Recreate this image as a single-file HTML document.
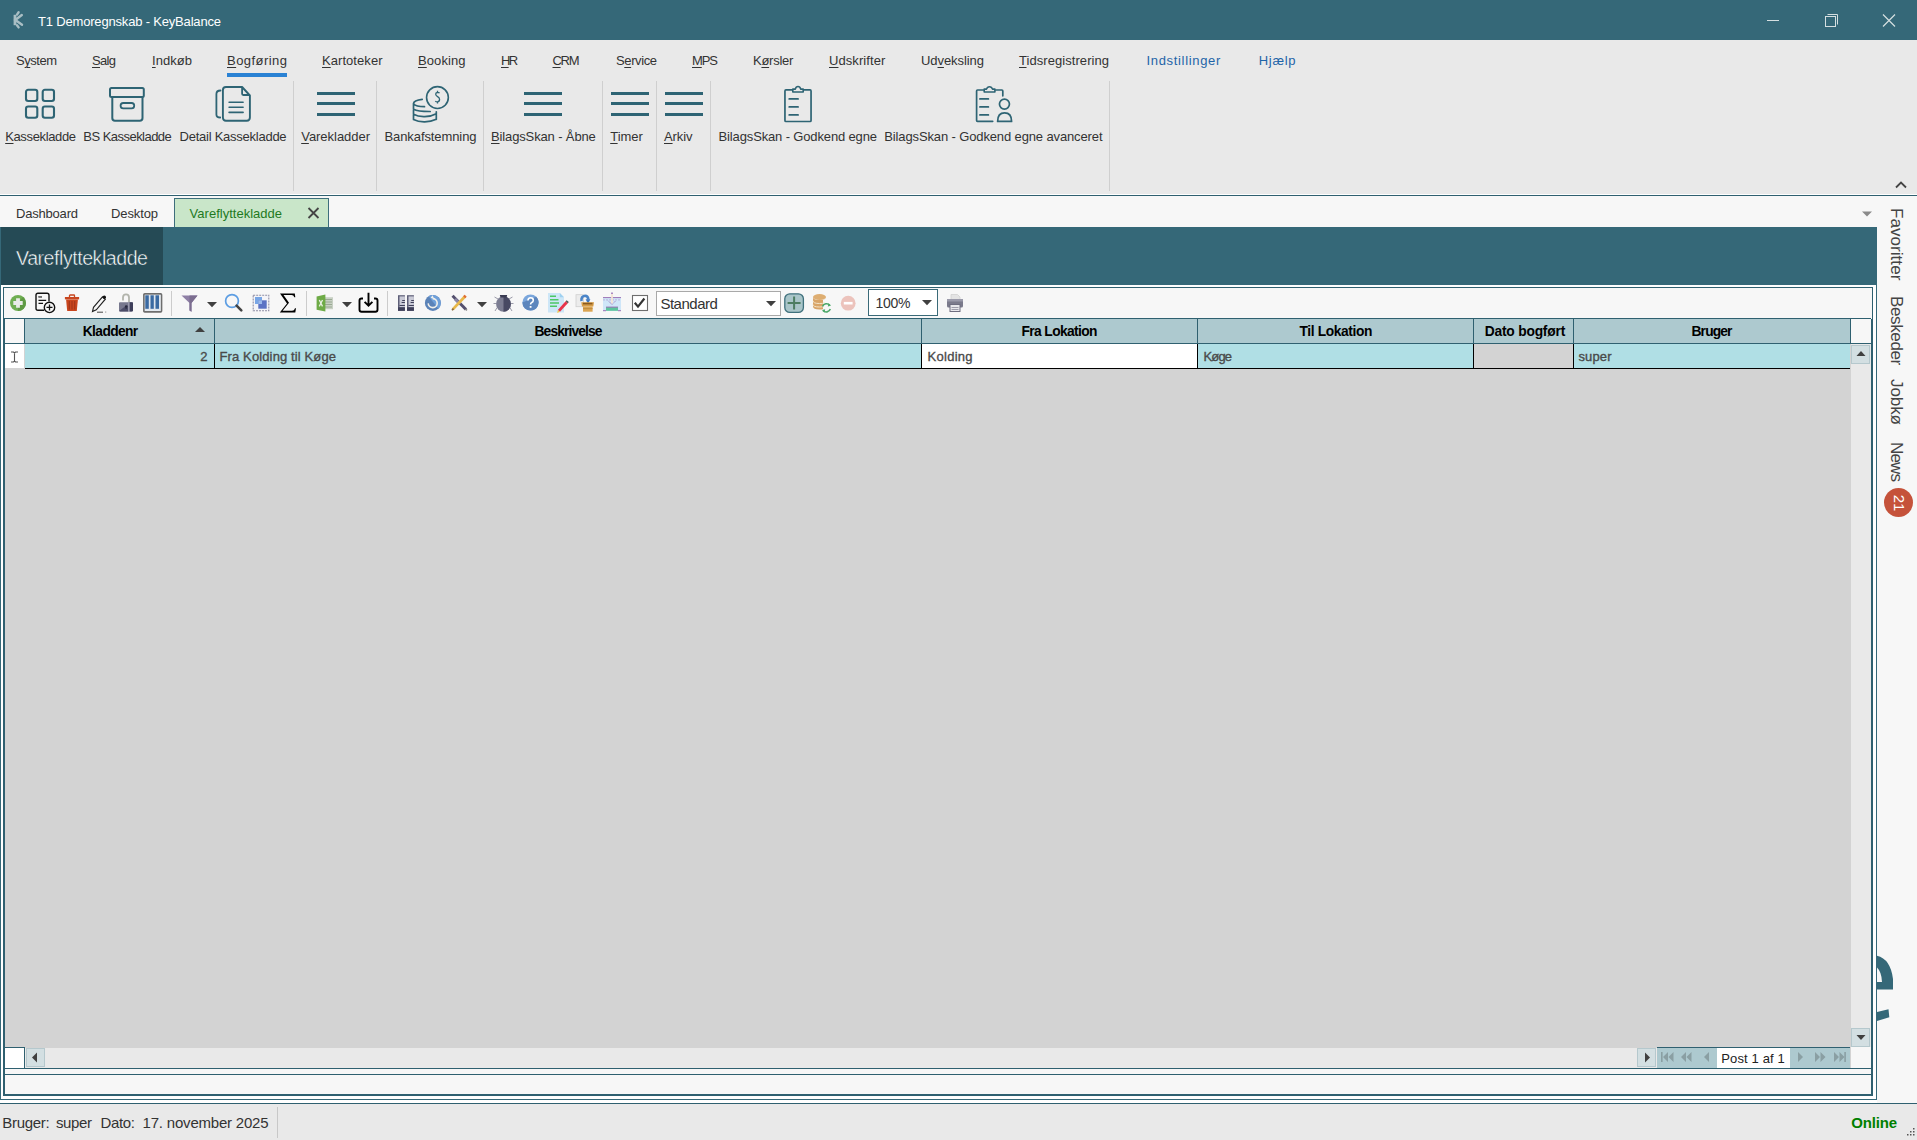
<!DOCTYPE html>
<html><head><meta charset="utf-8"><style>
html,body{margin:0;padding:0;}
body{width:1917px;height:1140px;overflow:hidden;position:relative;background:#e9e9e9;font-family:"Liberation Sans",sans-serif;}
.a{position:absolute;}
.t{white-space:nowrap;}
u{text-decoration:underline;text-decoration-thickness:1px;text-underline-offset:1.5px;}
svg{overflow:visible;}
</style></head><body>
<div class="a" style="left:0px;top:0px;width:1917px;height:40px;background:#356878;"></div>
<svg class="a" style="left:9px;top:10px;filter:blur(0.7px);" width="16" height="19" viewBox="0 0 16 19"><rect x="4.6" y="4.8" width="2.8" height="10.4" fill="#a9bec4"/><path d="M6 10.3 L12.8 5 M6 9.7 L13 14.8 M9.6 2.3 L8 4.6 M9.6 17.4 L8 15.2" stroke="#a9bec4" stroke-width="2.4" fill="none" stroke-linecap="round"/></svg>
<div class="a t " style="left:38.00px;top:11.79px;font-size:13px;line-height:20px;color:#ffffff;letter-spacing:-0.180px;">T1 Demoregnskab - KeyBalance</div>
<div class="a" style="left:1767px;top:20px;width:12px;height:1px;background:#d5dfe1;"></div>
<svg class="a" style="left:1824px;top:13px;" width="15" height="15" viewBox="0 0 15 15"><rect x="1.5" y="3.5" width="10" height="10" fill="none" stroke="#d5dfe1" stroke-width="1"/><path d="M3.5 1.5 H13.5 V11.5" fill="none" stroke="#d5dfe1" stroke-width="1"/></svg>
<svg class="a" style="left:1882px;top:14px;" width="14" height="13" viewBox="0 0 14 13"><path d="M1 0.5 L13 12.5 M13 0.5 L1 12.5" stroke="#d5dfe1" stroke-width="1.2"/></svg>
<div class="a" style="left:0px;top:40px;width:1917px;height:154px;background:#e9e9e9;"></div>
<div class="a t " style="left:16.00px;top:50.99px;font-size:13px;line-height:20px;color:#333333;letter-spacing:-0.468px;">S<u>y</u>stem</div>
<div class="a t " style="left:92.00px;top:50.99px;font-size:13px;line-height:20px;color:#333333;letter-spacing:-0.673px;"><u>S</u>alg</div>
<div class="a t " style="left:152.00px;top:50.99px;font-size:13px;line-height:20px;color:#333333;letter-spacing:0.052px;"><u>I</u>ndkøb</div>
<div class="a t " style="left:227.00px;top:50.99px;font-size:13px;line-height:20px;color:#333333;letter-spacing:0.455px;"><u>B</u>ogføring</div>
<div class="a t " style="left:322.00px;top:50.99px;font-size:13px;line-height:20px;color:#333333;letter-spacing:0.059px;"><u>K</u>artoteker</div>
<div class="a t " style="left:418.00px;top:50.99px;font-size:13px;line-height:20px;color:#333333;letter-spacing:0.087px;"><u>B</u>ooking</div>
<div class="a t " style="left:501.00px;top:50.99px;font-size:13px;line-height:20px;color:#333333;letter-spacing:-1.777px;"><u>H</u>R</div>
<div class="a t " style="left:552.50px;top:50.99px;font-size:13px;line-height:20px;color:#333333;letter-spacing:-1.303px;"><u>C</u>RM</div>
<div class="a t " style="left:616.00px;top:50.99px;font-size:13px;line-height:20px;color:#333333;letter-spacing:-0.391px;">S<u>e</u>rvice</div>
<div class="a t " style="left:692.00px;top:50.99px;font-size:13px;line-height:20px;color:#333333;letter-spacing:-1.086px;"><u>M</u>PS</div>
<div class="a t " style="left:753.00px;top:50.99px;font-size:13px;line-height:20px;color:#333333;letter-spacing:-0.264px;">K<u>ø</u>rsler</div>
<div class="a t " style="left:829.00px;top:50.99px;font-size:13px;line-height:20px;color:#333333;letter-spacing:0.076px;"><u>U</u>dskrifter</div>
<div class="a t " style="left:921.00px;top:50.99px;font-size:13px;line-height:20px;color:#333333;letter-spacing:-0.065px;">Ud<u>v</u>eksling</div>
<div class="a t " style="left:1019.00px;top:50.99px;font-size:13px;line-height:20px;color:#333333;letter-spacing:0.060px;"><u>T</u>idsregistrering</div>
<div class="a t " style="left:1146.50px;top:50.99px;font-size:13px;line-height:20px;color:#1e64a8;letter-spacing:0.671px;">Indstillinger</div>
<div class="a t " style="left:1258.70px;top:50.99px;font-size:13px;line-height:20px;color:#1e64a8;letter-spacing:0.711px;">Hjælp</div>
<div class="a" style="left:227px;top:73px;width:60px;height:4px;background:#2a82d4;"></div>
<div class="a" style="left:293px;top:81px;width:1px;height:110px;background:#cfcfcf;"></div>
<div class="a" style="left:376px;top:81px;width:1px;height:110px;background:#cfcfcf;"></div>
<div class="a" style="left:483px;top:81px;width:1px;height:110px;background:#cfcfcf;"></div>
<div class="a" style="left:602px;top:81px;width:1px;height:110px;background:#cfcfcf;"></div>
<div class="a" style="left:656px;top:81px;width:1px;height:110px;background:#cfcfcf;"></div>
<div class="a" style="left:710px;top:81px;width:1px;height:110px;background:#cfcfcf;"></div>
<div class="a" style="left:1109px;top:81px;width:1px;height:110px;background:#cfcfcf;"></div>
<div class="a t " style="left:5.20px;top:127.19px;font-size:13px;line-height:20px;color:#333333;letter-spacing:-0.364px;"><u>K</u>assekladde</div>
<div class="a t " style="left:83.30px;top:127.19px;font-size:13px;line-height:20px;color:#333333;letter-spacing:-0.530px;">BS Kassekladde</div>
<div class="a t " style="left:179.60px;top:127.19px;font-size:13px;line-height:20px;color:#333333;letter-spacing:-0.252px;">Detail Kassekladde</div>
<div class="a t " style="left:301.20px;top:127.19px;font-size:13px;line-height:20px;color:#333333;letter-spacing:-0.033px;"><u>V</u>arekladder</div>
<div class="a t " style="left:384.50px;top:127.19px;font-size:13px;line-height:20px;color:#333333;letter-spacing:-0.094px;">Bankafstemning</div>
<div class="a t " style="left:491.00px;top:127.19px;font-size:13px;line-height:20px;color:#333333;letter-spacing:-0.134px;"><u>B</u>ilagsSkan - Åbne</div>
<div class="a t " style="left:610.20px;top:127.19px;font-size:13px;line-height:20px;color:#333333;letter-spacing:-0.033px;"><u>T</u>imer</div>
<div class="a t " style="left:664.00px;top:127.19px;font-size:13px;line-height:20px;color:#333333;letter-spacing:-0.122px;"><u>A</u>rkiv</div>
<div class="a t " style="left:718.60px;top:127.19px;font-size:13px;line-height:20px;color:#333333;letter-spacing:-0.145px;">BilagsSkan - Godkend egne</div>
<div class="a t " style="left:884.30px;top:127.19px;font-size:13px;line-height:20px;color:#333333;letter-spacing:-0.129px;">BilagsSkan - Godkend egne avanceret</div>
<svg class="a" style="left:20px;top:85px;" width="40" height="40" viewBox="0 0 40 40"><rect x="6" y="4.75" width="11.3" height="11.3" rx="2.2" fill="none" stroke="#2e6474" stroke-width="2.1"/><rect x="22.700000000000003" y="4.75" width="11.3" height="11.3" rx="2.2" fill="none" stroke="#2e6474" stroke-width="2.1"/><rect x="6" y="21.5" width="11.3" height="11.3" rx="2.2" fill="none" stroke="#2e6474" stroke-width="2.1"/><rect x="22.700000000000003" y="21.5" width="11.3" height="11.3" rx="2.2" fill="none" stroke="#2e6474" stroke-width="2.1"/></svg>
<svg class="a" style="left:105px;top:84px;" width="44" height="40" viewBox="0 0 44 40"><rect x="5" y="4" width="33.8" height="9" rx="1.5" fill="none" stroke="#2e6474" stroke-width="2"/><path d="M7.3 13 V34 Q7.3 36.8 10 36.8 H34.8 Q37.5 36.8 37.5 34 V13" fill="none" stroke="#2e6474" stroke-width="2"/><rect x="15.6" y="19" width="13.6" height="5.3" rx="2.6" fill="none" stroke="#2e6474" stroke-width="1.8"/></svg>
<svg class="a" style="left:212px;top:84px;" width="42" height="40" viewBox="0 0 42 40"><path d="M8.5 6.5 Q4.4 6.5 4.4 10 V30.5 Q4.4 33.5 8.2 33.5" fill="none" stroke="#2e6474" stroke-width="1.8" stroke-linecap="round"/><path d="M14 3 H30.1 L37.9 11.5 V33.5 Q37.9 36.7 34.7 36.7 H14 Q10.9 36.7 10.9 33.5 V6.2 Q10.9 3 14 3 Z" fill="none" stroke="#2e6474" stroke-width="1.9" stroke-linejoin="round"/><path d="M30.1 3 V9.8 Q30.1 11 31.3 11 H37.9" fill="none" stroke="#2e6474" stroke-width="1.8"/><path d="M17.1 18.3 H31.1 M17.1 23.2 H31.1 M17.1 28.4 H31.1" stroke="#2e6474" stroke-width="1.6" stroke-linecap="round"/></svg>
<div class="a" style="left:317px;top:92px;width:38px;height:3.2px;background:#2e6474;"></div>
<div class="a" style="left:317px;top:102.3px;width:38px;height:3.2px;background:#2e6474;"></div>
<div class="a" style="left:317px;top:112.6px;width:38px;height:3.2px;background:#2e6474;"></div>
<div class="a" style="left:524px;top:92px;width:38px;height:3.2px;background:#2e6474;"></div>
<div class="a" style="left:524px;top:102.3px;width:38px;height:3.2px;background:#2e6474;"></div>
<div class="a" style="left:524px;top:112.6px;width:38px;height:3.2px;background:#2e6474;"></div>
<div class="a" style="left:611px;top:92px;width:38px;height:3.2px;background:#2e6474;"></div>
<div class="a" style="left:611px;top:102.3px;width:38px;height:3.2px;background:#2e6474;"></div>
<div class="a" style="left:611px;top:112.6px;width:38px;height:3.2px;background:#2e6474;"></div>
<div class="a" style="left:665px;top:92px;width:38px;height:3.2px;background:#2e6474;"></div>
<div class="a" style="left:665px;top:102.3px;width:38px;height:3.2px;background:#2e6474;"></div>
<div class="a" style="left:665px;top:112.6px;width:38px;height:3.2px;background:#2e6474;"></div>
<svg class="a" style="left:410px;top:83px;" width="42" height="42" viewBox="0 0 42 42"><circle cx="27.45" cy="14.55" r="10.9" fill="none" stroke="#2e6474" stroke-width="1.6"/><path d="M29.6 9.9 Q28.8 9.3 27.4 9.3 Q25.6 9.5 25.7 11.3 Q25.8 12.6 27.6 13.6 Q29.6 14.8 29.6 16.4 Q29.5 18.7 27.4 18.8 Q26 18.8 25.3 18.1 M27.5 7.8 V9.3 M27.5 18.8 V20.6" fill="none" stroke="#2e6474" stroke-width="1.3"/><path d="M12.2 16.3 Q4 17.2 3.5 20.3 V36.5 M3.5 20.8 Q6 23.7 14.5 23.7 M3.5 26.2 Q8 28.6 20.2 28.5 M3.5 31.3 Q8 33.8 14.7 33.6 Q21 33.6 26.3 30.7 M26.3 28.8 V36.3 M3.5 36.5 Q8 38.9 14.7 38.8 Q21 38.7 26.3 36.3" fill="none" stroke="#2e6474" stroke-width="1.7" stroke-linecap="round"/></svg>
<svg class="a" style="left:780px;top:82px;" width="36" height="44" viewBox="0 0 36 44"><path d="M12.3 7.95 H5.95 Q4.95 7.95 4.95 8.95 V38.5 Q4.95 39.5 5.95 39.5 H30.05 Q31.05 39.5 31.05 38.5 V8.95 Q31.05 7.95 30.05 7.95 H23.7" fill="none" stroke="#2e6474" stroke-width="1.7"/><path d="M12.8 10 V7.1 H15.3 Q16 4.5 18 4.5 Q20 4.5 20.7 7.1 H23.2 V10 Z" fill="none" stroke="#2e6474" stroke-width="1.6" stroke-linejoin="round"/><path d="M9.2 16.9 H18.1 M9.2 24.9 H18.1 M9.2 32.9 H18.1" stroke="#2e6474" stroke-width="1.7" stroke-linecap="round"/></svg>
<svg class="a" style="left:972px;top:82px;" width="44" height="44" viewBox="0 0 44 44"><path d="M11.4 8 H5.5 Q4.6 8 4.6 9 V38.4 Q4.6 39.3 5.5 39.3 H20.7 M23.8 8 H29.9 Q30.8 8 30.8 9 V13.8" fill="none" stroke="#2e6474" stroke-width="1.7" stroke-linecap="round"/><path d="M12.2 10 V7.1 H14.5 Q15.3 4.7 17.5 4.7 Q19.7 4.7 20.5 7.1 H22.9 V10 Z" fill="none" stroke="#2e6474" stroke-width="1.6" stroke-linejoin="round"/><path d="M7.9 16.9 H16.4 M7.9 24.9 H16.4 M7.9 32.9 H16.4" stroke="#2e6474" stroke-width="1.7" stroke-linecap="round"/><circle cx="32.45" cy="22.1" r="5" fill="none" stroke="#2e6474" stroke-width="1.7"/><path d="M25.6 39.4 Q25.6 30.8 32.6 30.8 Q39.6 30.8 39.6 39.4 Z" fill="none" stroke="#2e6474" stroke-width="1.7" stroke-linejoin="round"/></svg>
<svg class="a" style="left:1893.5px;top:179.5px;" width="14" height="10" viewBox="0 0 14 10"><path d="M2 7.5 L7 2.5 L12 7.5" fill="none" stroke="#444" stroke-width="1.8"/></svg>
<div class="a" style="left:0px;top:194px;width:1917px;height:1px;background:#ffffff;"></div>
<div class="a" style="left:0px;top:195px;width:1917px;height:1px;background:#2f6070;"></div>
<div class="a" style="left:0px;top:196px;width:1917px;height:31px;background:#f7f7f7;"></div>
<div class="a t " style="left:16.00px;top:204.49px;font-size:13px;line-height:20px;color:#333333;letter-spacing:-0.199px;">Dashboard</div>
<div class="a t " style="left:111.00px;top:204.49px;font-size:13px;line-height:20px;color:#333333;letter-spacing:-0.115px;">Desktop</div>
<div class="a" style="left:174px;top:198px;width:155px;height:29px;background:#c9e6c9;border:1px solid #3d6e7c;border-bottom:none;box-sizing:border-box;"></div>
<div class="a t " style="left:189.60px;top:204.49px;font-size:13px;line-height:20px;color:#1f7a1f;letter-spacing:0.010px;">Vareflyttekladde</div>
<svg class="a" style="left:307px;top:207px;" width="13" height="12" viewBox="0 0 13 12"><path d="M1.5 1 L11.5 11 M11.5 1 L1.5 11" stroke="#444" stroke-width="1.8"/></svg>
<svg class="a" style="left:1861px;top:210.7px;" width="12" height="7" viewBox="0 0 12 7"><path d="M1 0.5 H11 L6 5.5 Z" fill="#8a8a8a"/></svg>
<div class="a" style="left:1877px;top:227px;width:40px;height:876px;background:#f7f7f7;"></div>
<div class="a t" style="left:1896px;top:207.5px;font-size:17px;line-height:20px;color:#444;letter-spacing:0.057px;transform-origin:0 0;transform:rotate(90deg) translate(0,-10.0px);">Favoritter</div>
<div class="a t" style="left:1896px;top:295.5px;font-size:17px;line-height:20px;color:#444;letter-spacing:-0.373px;transform-origin:0 0;transform:rotate(90deg) translate(0,-10.0px);">Beskeder</div>
<div class="a t" style="left:1896px;top:379px;font-size:17px;line-height:20px;color:#444;letter-spacing:-0.073px;transform-origin:0 0;transform:rotate(90deg) translate(0,-10.0px);">Jobkø</div>
<div class="a t" style="left:1896px;top:442px;font-size:17px;line-height:20px;color:#444;letter-spacing:-0.836px;transform-origin:0 0;transform:rotate(90deg) translate(0,-10.0px);">News</div>
<div class="a" style="left:1884px;top:488px;width:29px;height:29px;border-radius:50%;background:#c5523a;"></div>
<div class="a t" style="left:1898.5px;top:502.5px;font-size:15px;line-height:20px;color:#fff;transform:translate(-50%,-50%) rotate(90deg);">21</div>
<svg class="a" style="left:1877px;top:955px;" width="20" height="70" viewBox="0 0 20 70"><path d="M0 0.8 Q13.5 4 16 24 V34.6 H0 V27 H5 Q4.6 17 0 12.6 Z" fill="#356878"/><path d="M0 57 L11.5 54.3 L12.3 62.2 L0 66 Z" fill="#356878"/></svg>
<div class="a" style="left:0px;top:227px;width:1877px;height:876px;background:#ffffff;"></div>
<div class="a" style="left:0px;top:227px;width:1px;height:873px;background:#356878;"></div>
<div class="a" style="left:1876px;top:227px;width:1px;height:873px;background:#356878;"></div>
<div class="a" style="left:0px;top:1099px;width:1877px;height:1px;background:#356878;"></div>
<div class="a" style="left:1px;top:227px;width:1875px;height:58px;background:#356878;"></div>
<div class="a" style="left:1px;top:227px;width:162px;height:58px;background:#254a55;"></div>
<div class="a t " style="left:16.00px;top:248.20px;font-size:19.6px;line-height:20px;color:#ffffff;letter-spacing:-0.472px;-webkit-text-stroke:0.45px #254a55;">Vareflyttekladde</div>
<div class="a" style="left:3px;top:287px;width:1870px;height:809px;background:#f7f7f7;border:1px solid #2f6070;box-sizing:border-box;"></div>
<div class="a" style="left:3px;top:1094px;width:1870px;height:2px;background:#2f6070;"></div>
<div class="a" style="left:3px;top:1069px;width:2px;height:27px;background:#2f6070;"></div>
<div class="a" style="left:1871px;top:1069px;width:2px;height:27px;background:#2f6070;"></div>
<div class="a" style="left:171px;top:291px;width:1px;height:25px;background:#cccccc;"></div>
<div class="a" style="left:306px;top:291px;width:1px;height:25px;background:#cccccc;"></div>
<div class="a" style="left:387px;top:291px;width:1px;height:25px;background:#cccccc;"></div>
<div class="a" style="left:4px;top:318px;width:1867px;height:1px;background:#2f6070;"></div>
<div class="a" style="left:4px;top:319px;width:1867px;height:750px;background:#d3d3d3;"></div>
<div class="a" style="left:5px;top:319px;width:19px;height:24px;background:#f7f7f7;"></div>
<div class="a" style="left:25px;top:319px;width:1825px;height:24px;background:#adc9cf;"></div>
<div class="a" style="left:1851px;top:319px;width:20px;height:24px;background:#f7f7f7;"></div>
<div class="a" style="left:4px;top:343px;width:1867px;height:1px;background:#2f6070;"></div>
<div class="a" style="left:4px;top:319px;width:1px;height:750px;background:#2f6070;"></div>
<div class="a" style="left:1871px;top:319px;width:1px;height:750px;background:#2f6070;"></div>
<div class="a" style="left:24px;top:319px;width:1px;height:25px;background:#2f6070;"></div>
<div class="a" style="left:214px;top:319px;width:1px;height:25px;background:#2f6070;"></div>
<div class="a" style="left:921px;top:319px;width:1px;height:25px;background:#2f6070;"></div>
<div class="a" style="left:1197px;top:319px;width:1px;height:25px;background:#2f6070;"></div>
<div class="a" style="left:1473px;top:319px;width:1px;height:25px;background:#2f6070;"></div>
<div class="a" style="left:1573px;top:319px;width:1px;height:25px;background:#2f6070;"></div>
<div class="a" style="left:1850px;top:319px;width:1px;height:25px;background:#2f6070;"></div>
<div class="a t " style="left:82.75px;top:322.42px;font-size:13.8px;line-height:20px;color:#000000;font-weight:bold;letter-spacing:-0.615px;">Kladdenr</div>
<div class="a t " style="left:534.50px;top:322.42px;font-size:13.8px;line-height:20px;color:#000000;font-weight:bold;letter-spacing:-0.872px;">Beskrivelse</div>
<div class="a t " style="left:1021.50px;top:322.42px;font-size:13.8px;line-height:20px;color:#000000;font-weight:bold;letter-spacing:-0.618px;">Fra Lokation</div>
<div class="a t " style="left:1299.50px;top:322.42px;font-size:13.8px;line-height:20px;color:#000000;font-weight:bold;letter-spacing:-0.379px;">Til Lokation</div>
<div class="a t " style="left:1484.75px;top:322.42px;font-size:13.8px;line-height:20px;color:#000000;font-weight:bold;letter-spacing:-0.207px;">Dato bogført</div>
<div class="a t " style="left:1691.50px;top:322.42px;font-size:13.8px;line-height:20px;color:#000000;font-weight:bold;letter-spacing:-0.848px;">Bruger</div>
<svg class="a" style="left:194px;top:326px;" width="12" height="7" viewBox="0 0 12 7"><path d="M1 6 L6 1 L11 6 Z" fill="#404040"/></svg>
<div class="a" style="left:5px;top:344px;width:19px;height:24px;background:#ffffff;"></div>
<div class="a" style="left:25px;top:344px;width:1825px;height:24px;background:#b0dfe5;"></div>
<div class="a" style="left:922px;top:344px;width:275px;height:24px;background:#ffffff;"></div>
<div class="a" style="left:1474px;top:344px;width:99px;height:24px;background:#d3d3d3;"></div>
<div class="a" style="left:25px;top:368px;width:1825px;height:1px;background:#000000;"></div>
<div class="a" style="left:214px;top:344px;width:1px;height:25px;background:#000000;"></div>
<div class="a" style="left:921px;top:344px;width:1px;height:25px;background:#000000;"></div>
<div class="a" style="left:1197px;top:344px;width:1px;height:25px;background:#000000;"></div>
<div class="a" style="left:1473px;top:344px;width:1px;height:25px;background:#000000;"></div>
<div class="a" style="left:1573px;top:344px;width:1px;height:25px;background:#000000;"></div>
<svg class="a" style="left:10px;top:351px;" width="9" height="12" viewBox="0 0 9 12"><path d="M1 1 H3.5 L4.5 2 L5.5 1 H8 M4.5 2 V10 M1 11 H3.5 L4.5 10 L5.5 11 H8" fill="none" stroke="#555" stroke-width="1.1"/></svg>
<div class="a t " style="left:200.27px;top:346.79px;font-size:13px;line-height:20px;color:#4a4a4a;-webkit-text-stroke:0.35px #4a4a4a;">2</div>
<div class="a t " style="left:219.50px;top:346.79px;font-size:13px;line-height:20px;color:#4a4a4a;letter-spacing:0.123px;-webkit-text-stroke:0.35px #4a4a4a;">Fra Kolding til Køge</div>
<div class="a t " style="left:927.60px;top:346.79px;font-size:13px;line-height:20px;color:#4a4a4a;letter-spacing:0.272px;-webkit-text-stroke:0.35px #4a4a4a;">Kolding</div>
<div class="a t " style="left:1203.50px;top:346.79px;font-size:13px;line-height:20px;color:#4a4a4a;letter-spacing:-0.857px;-webkit-text-stroke:0.35px #4a4a4a;">Køge</div>
<div class="a t " style="left:1578.50px;top:346.79px;font-size:13px;line-height:20px;color:#4a4a4a;letter-spacing:0.121px;-webkit-text-stroke:0.35px #4a4a4a;">super</div>
<div class="a" style="left:1851px;top:344px;width:20px;height:703px;background:#e9e9e9;"></div>
<div class="a" style="left:1851px;top:345px;width:19px;height:19px;background:#d3dfe2;border:1px solid #b5c8cd;box-sizing:border-box;"></div>
<svg class="a" style="left:1856px;top:350px;" width="10" height="7" viewBox="0 0 10 7"><path d="M0.5 6 L5 1 L9.5 6 Z" fill="#404040"/></svg>
<div class="a" style="left:1851px;top:1028px;width:19px;height:19px;background:#d3dfe2;border:1px solid #b5c8cd;box-sizing:border-box;"></div>
<svg class="a" style="left:1856px;top:1034px;" width="10" height="7" viewBox="0 0 10 7"><path d="M0.5 1 L5 6 L9.5 1 Z" fill="#404040"/></svg>
<div class="a" style="left:4px;top:1047px;width:21px;height:1px;background:#2f6070;"></div>
<div class="a" style="left:1657px;top:1047px;width:193px;height:1px;background:#2f6070;"></div>
<div class="a" style="left:5px;top:1048px;width:19px;height:20px;background:#ffffff;"></div>
<div class="a" style="left:24px;top:1047px;width:1px;height:21px;background:#2f6070;"></div>
<div class="a" style="left:25px;top:1048px;width:1632px;height:20px;background:#e9e9e9;"></div>
<div class="a" style="left:26px;top:1048px;width:19px;height:19px;background:#d3dfe2;border:1px solid #b5c8cd;box-sizing:border-box;"></div>
<svg class="a" style="left:31px;top:1052px;" width="7" height="11" viewBox="0 0 7 11"><path d="M6 0.5 L1 5.5 L6 10.5 Z" fill="#404040"/></svg>
<div class="a" style="left:1637px;top:1048px;width:19px;height:19px;background:#d3dfe2;border:1px solid #b5c8cd;box-sizing:border-box;"></div>
<svg class="a" style="left:1644px;top:1052px;" width="7" height="11" viewBox="0 0 7 11"><path d="M1 0.5 L6 5.5 L1 10.5 Z" fill="#404040"/></svg>
<div class="a" style="left:1657px;top:1048px;width:193px;height:20px;background:#adc9cf;"></div>
<div class="a" style="left:1717px;top:1048px;width:73px;height:20px;background:#ffffff;"></div>
<div class="a" style="left:1851px;top:1047px;width:20px;height:21px;background:#f7f7f7;"></div>
<div class="a t " style="left:1721.20px;top:1049.49px;font-size:13px;line-height:20px;color:#222222;letter-spacing:0.145px;">Post 1 af 1</div>
<svg class="a" style="left:1660px;top:1051px;" width="16" height="12" viewBox="0 0 16 12"><rect x="1" y="1" width="1.6" height="10" fill="#8a9fa3"/><path d="M8 1 L3 6 L8 11 Z M13.5 1 L8.5 6 L13.5 11 Z" fill="#8a9fa3"/></svg>
<svg class="a" style="left:1680px;top:1051px;" width="13" height="12" viewBox="0 0 13 12"><path d="M6 1 L1 6 L6 11 Z M11.5 1 L6.5 6 L11.5 11 Z" fill="#8a9fa3"/></svg>
<svg class="a" style="left:1702px;top:1051px;" width="9" height="12" viewBox="0 0 9 12"><path d="M7 1 L2 6 L7 11 Z" fill="#8a9fa3"/></svg>
<svg class="a" style="left:1796px;top:1051px;" width="9" height="12" viewBox="0 0 9 12"><path d="M2 1 L7 6 L2 11 Z" fill="#8a9fa3"/></svg>
<svg class="a" style="left:1813px;top:1051px;" width="14" height="12" viewBox="0 0 14 12"><path d="M2 1 L7 6 L2 11 Z M7.5 1 L12.5 6 L7.5 11 Z" fill="#8a9fa3"/></svg>
<svg class="a" style="left:1832px;top:1051px;" width="15" height="12" viewBox="0 0 15 12"><path d="M2 1 L7 6 L2 11 Z M7.5 1 L12.5 6 L7.5 11 Z" fill="#8a9fa3"/><rect x="12.3" y="1" width="1.6" height="10" fill="#8a9fa3"/></svg>
<div class="a" style="left:4px;top:1068px;width:1868px;height:1px;background:#2f6070;"></div>
<div class="a" style="left:5px;top:1069px;width:1866px;height:5px;background:#f7f7f7;"></div>
<div class="a" style="left:4px;top:1074px;width:1868px;height:1px;background:#2f6070;"></div>
<div class="a" style="left:0px;top:1103px;width:1917px;height:1px;background:#2f6070;"></div>
<div class="a" style="left:0px;top:1104px;width:1917px;height:36px;background:#e9e9e9;"></div>
<div class="a t " style="left:2.30px;top:1112.80px;font-size:15px;line-height:20px;color:#333333;letter-spacing:-0.314px;">Bruger:</div>
<div class="a t " style="left:56.00px;top:1112.80px;font-size:15px;line-height:20px;color:#333333;letter-spacing:-0.380px;">super</div>
<div class="a t " style="left:100.60px;top:1112.80px;font-size:15px;line-height:20px;color:#333333;letter-spacing:-0.363px;">Dato:</div>
<div class="a t " style="left:142.60px;top:1112.80px;font-size:15px;line-height:20px;color:#333333;letter-spacing:-0.203px;">17. november 2025</div>
<div class="a" style="left:277px;top:1107px;width:1px;height:31px;background:#c8c8c8;"></div>
<div class="a t " style="left:1851.20px;top:1112.80px;font-size:15px;line-height:20px;color:#008000;font-weight:bold;letter-spacing:-0.173px;">Online</div>
<svg class="a" style="left:1905px;top:1128px;" width="10" height="8" viewBox="0 0 10 8"><rect x="8" y="0" width="1.5" height="1.5" fill="#555"/><rect x="7" y="-1" width="1" height="1" fill="#999" opacity="0"/><rect x="5" y="3" width="1.5" height="1.5" fill="#555"/><rect x="4" y="2" width="1" height="1" fill="#999" opacity="0"/><rect x="8" y="3" width="1.5" height="1.5" fill="#555"/><rect x="7" y="2" width="1" height="1" fill="#999" opacity="0"/><rect x="2" y="6" width="1.5" height="1.5" fill="#555"/><rect x="1" y="5" width="1" height="1" fill="#999" opacity="0"/><rect x="5" y="6" width="1.5" height="1.5" fill="#555"/><rect x="4" y="5" width="1" height="1" fill="#999" opacity="0"/><rect x="8" y="6" width="1.5" height="1.5" fill="#555"/><rect x="7" y="5" width="1" height="1" fill="#999" opacity="0"/></svg>
<svg class="a" style="left:10px;top:295px;" width="16" height="16" viewBox="0 0 16 16"><circle cx="8" cy="8" r="8" fill="#6fae52"/><path d="M8 16 A8 8 0 0 0 16 8 A8 8 0 0 0 13 1.8 L8 8 Z" fill="#5f9a44"/><path d="M6.1 3.3 H9.9 V6.1 H12.7 V9.9 H9.9 V12.7 H6.1 V9.9 H3.3 V6.1 H6.1 Z" fill="#e9ebe8"/></svg>
<svg class="a" style="left:34px;top:292px;" width="22" height="22" viewBox="0 0 22 22"><path d="M10 18.3 H4 Q2 18.3 2 16.3 V3.3 Q2 1.3 4 1.3 H13 Q15 1.3 15 3.3 V9.5" fill="none" stroke="#111" stroke-width="1.4"/><path d="M4.5 4.8 H8 M4.5 8.3 H12.2 M4.5 11.4 H9" stroke="#111" stroke-width="1.3"/><path d="M4.5 4.8 H8" stroke="#777" stroke-width="1.3"/><circle cx="15.5" cy="15.4" r="5.2" fill="#f7f7f7" stroke="#111" stroke-width="1.4"/><path d="M15.5 12.4 V18.4 M12.5 15.4 H18.5" stroke="#111" stroke-width="1.3"/></svg>
<svg class="a" style="left:64px;top:294px;" width="16" height="18" viewBox="0 0 16 18"><path d="M5.5 3 V1.6 Q5.5 1 6.1 1 H9.9 Q10.5 1 10.5 1.6 V3" fill="none" stroke="#c8461f" stroke-width="1.3"/><rect x="0.9" y="3" width="14.2" height="2.4" fill="#c8461f"/><path d="M2.1 5.4 H13.9 L12.8 17 H3.2 Z" fill="#c9461e"/><path d="M5.3 7 V15.5 M8 7 V15.5 M10.7 7 V15.5" stroke="#a3361a" stroke-width="1.1"/></svg>
<svg class="a" style="left:91px;top:294px;" width="16" height="20" viewBox="0 0 16 20"><path d="M1.5 17.5 L2.5 13.3 L11.5 2.8 L14.3 5.2 L5.3 15.8 Z" fill="none" stroke="#222" stroke-width="1.1"/><circle cx="13.3" cy="3.3" r="1.7" fill="#111"/><path d="M6 18.2 H12" stroke="#444" stroke-width="1"/><rect x="14.3" y="17.6" width="0.9" height="0.9" fill="#666"/></svg>
<svg class="a" style="left:118px;top:293px;" width="16" height="20" viewBox="0 0 16 20"><path d="M5 7.6 V4.6 Q5 1.4 8 1.4 Q11 1.4 11 4.6 V10" fill="none" stroke="#b2b4ac" stroke-width="1.8"/><path d="M1 10 Q1 9.4 2 9.3 L14 9.3 Q15 9.4 15 10 V17.5 Q15 18.6 13.5 18.6 H2.5 Q1 18.6 1 17.5 Z" fill="#77788e"/><path d="M1 18 L8.5 12.5 H10.2 V18.6 H2 Z" fill="#4b4c68"/><rect x="10.2" y="9.3" width="1.5" height="9.3" fill="#a3a3b6"/><path d="M11.7 9.3 H14 Q15 9.4 15 10 V17.5 Q15 18.6 13.5 18.6 H11.7 Z" fill="#3d3e5a"/><circle cx="8.1" cy="13.4" r="1.2" fill="#2a2b40"/><rect x="7.6" y="13.4" width="1" height="2.6" fill="#2a2b40"/></svg>
<svg class="a" style="left:142px;top:292px;" width="21" height="21" viewBox="0 0 21 21"><rect x="1.9" y="1.9" width="17.6" height="17.9" rx="0.8" fill="#f4f6f8" stroke="#6e6e6e" stroke-width="1.7"/><rect x="2.9" y="2.9" width="15.6" height="15.9" fill="#dfe6ee"/><rect x="3.3" y="3.3" width="3.5" height="13.5" fill="#3a6aa2"/><rect x="8.5" y="3.3" width="3.3" height="13.5" fill="#3a6aa2"/><rect x="13.5" y="3.3" width="3.5" height="13.5" fill="#3a6aa2"/></svg>
<svg class="a" style="left:181px;top:295px;" width="18" height="18" viewBox="0 0 18 18"><path d="M0.5 0.5 H16.5 L10.5 8 V16.8 L8.5 15.5 V8 Z" fill="#8e7fa5"/><path d="M8.5 0.5 H16.5 L10.5 8 V16.8 L8.5 15.5 Z" fill="#7b6d8f"/></svg>
<svg class="a" style="left:207px;top:302px;" width="10" height="6" viewBox="0 0 10 6"><path d="M0 0 H10 L5 5.3 Z" fill="#404040"/></svg>
<svg class="a" style="left:224px;top:293px;" width="20" height="20" viewBox="0 0 20 20"><circle cx="8" cy="8" r="6.4" fill="none" stroke="#5d9ee3" stroke-width="1.7"/><path d="M12.6 12.6 L17.3 17.3" stroke="#444" stroke-width="2.6" stroke-linecap="round"/></svg>
<svg class="a" style="left:252px;top:294px;" width="18" height="18" viewBox="0 0 18 18"><rect x="1.2" y="1.2" width="15.6" height="15.6" fill="#f4f4f8" stroke="#8e8ea4" stroke-width="1.1" stroke-dasharray="2 1"/><rect x="3" y="3" width="7" height="7" fill="#78a6e6"/><rect x="6.3" y="6.3" width="8.4" height="8.4" fill="#5b72c4"/><rect x="6.3" y="6.3" width="3.7" height="3.7" fill="#9ab9ec"/></svg>
<svg class="a" style="left:279px;top:292px;" width="18" height="22" viewBox="0 0 18 22"><path d="M1 1.5 H15.8 L16.3 5.2 H15.3 Q14.7 3 12.5 3 H4.5 L10 10.8 L3.6 18.8 H13 Q15.3 18.8 16 16.3 H17 L16.3 20.5 H0.8 L8 11.5 Z" fill="#000"/></svg>
<svg class="a" style="left:316px;top:294px;" width="18" height="18" viewBox="0 0 18 18"><rect x="7" y="3.2" width="10" height="12" fill="#c8d0c4"/><path d="M9 5.5 H16 M9 8 H16 M9 10.5 H16 M9 13 H16" stroke="#9aaa94" stroke-width="1"/><path d="M0.6 2.4 L9.4 0.6 V17.4 L0.6 15.8 Z" fill="#6eab47"/><path d="M3.3 6 L6.5 12.4 M6.5 6 L3.3 12.4" stroke="#e8f0e2" stroke-width="1.3"/></svg>
<svg class="a" style="left:342px;top:302px;" width="10" height="6" viewBox="0 0 10 6"><path d="M0 0 H10 L5 5.3 Z" fill="#404040"/></svg>
<svg class="a" style="left:358px;top:292px;" width="22" height="22" viewBox="0 0 22 22"><path d="M5 6.5 H3.6 Q1.5 6.5 1.5 8.6 V17.8 Q1.5 19.8 3.6 19.8 H17.4 Q19.5 19.8 19.5 17.8 V8.6 Q19.5 6.5 17.4 6.5 H16" fill="none" stroke="#000" stroke-width="1.9"/><path d="M10.5 0.8 V13.5 M6.6 9.8 L10.5 13.7 L14.4 9.8" fill="none" stroke="#000" stroke-width="1.9"/></svg>
<svg class="a" style="left:397px;top:294px;" width="18" height="18" viewBox="0 0 18 18"><rect x="1" y="1.2" width="6.9" height="15.6" fill="#5e5f78"/><rect x="2.5" y="2.4" width="5.4" height="10.9" fill="#c9cad6"/><rect x="5.2" y="6" width="2.7" height="1" fill="#3f405a"/><rect x="4.6" y="8" width="3.3" height="1" fill="#3f405a"/><rect x="2.5" y="11" width="5.4" height="1" fill="#3f405a"/><rect x="1" y="13.3" width="6.9" height="3.5" fill="#3f405a"/><rect x="10" y="1.2" width="6.9" height="15.6" fill="#5e5f78"/><rect x="11.5" y="2.4" width="5.4" height="10.9" fill="#c9cad6"/><rect x="14.2" y="6" width="2.7" height="1" fill="#3f405a"/><rect x="13.6" y="8" width="3.3" height="1" fill="#3f405a"/><rect x="11.5" y="11" width="5.4" height="1" fill="#3f405a"/><rect x="10" y="13.3" width="6.9" height="3.5" fill="#3f405a"/></svg>
<svg class="a" style="left:424px;top:294px;" width="18" height="18" viewBox="0 0 18 18"><circle cx="8.9" cy="8.9" r="8" fill="#5b83b8"/><path d="M4.6 2.2 A8 8 0 0 1 14.3 14.8 Z" fill="#6fa0da"/><path d="M4.2 9.4 A4.5 4.5 0 1 0 8.6 4.6" fill="none" stroke="#f2f0ea" stroke-width="1.6"/><path d="M6.6 3.9 L8.6 1.2 L9.9 4.6 Z" fill="#f2f0ea"/></svg>
<svg class="a" style="left:451px;top:294px;" width="18" height="18" viewBox="0 0 18 18"><path d="M1.5 1.8 L15 15.5" stroke="#54506e" stroke-width="3"/><path d="M4 5 L9 10" stroke="#8c86a6" stroke-width="3"/><path d="M14.6 1.8 L1.8 15.4" stroke="#e8b84a" stroke-width="2.8"/><path d="M14.6 1.8 L13.2 3.2" stroke="#e06a3a" stroke-width="2.8"/><path d="M2.5 14.6 L1 16.3" stroke="#8a6a40" stroke-width="1.6"/><path d="M14.6 15 L16 16.4" stroke="#8a8a8a" stroke-width="1.6"/></svg>
<svg class="a" style="left:477px;top:302px;" width="10" height="6" viewBox="0 0 10 6"><path d="M0 0 H10 L5 5.3 Z" fill="#404040"/></svg>
<svg class="a" style="left:493px;top:294px;" width="22" height="18" viewBox="0 0 22 18"><path d="M5 5 L1.5 3 M16 5 L19.5 3 M3.5 9.5 L0.5 9.5 M17.5 9.5 L20.5 9.5 M4.2 13.5 L2 17 M16.8 13.5 L19 17" stroke="#9a9aa8" stroke-width="1"/><ellipse cx="10.5" cy="10" rx="7.4" ry="7.8" fill="#7c7d92"/><path d="M10.5 2.2 A7.4 7.8 0 0 1 10.5 17.8 Z" fill="#484963"/><path d="M6.8 1 H14.2 L13.5 3.4 H7.5 Z" fill="#3a3b52"/></svg>
<svg class="a" style="left:522px;top:294px;" width="18" height="18" viewBox="0 0 18 18"><circle cx="8.5" cy="8.5" r="8.1" fill="#7aa6dc"/><path d="M0.4 8.5 A8.1 8.1 0 0 0 8.5 16.6 A8.1 8.1 0 0 0 14.2 2.8 Z" fill="#5d86bd"/><path d="M6 6.5 Q6 3.8 8.6 3.8 Q11.3 3.8 11.3 6.3 Q11.3 8 9.4 8.8 Q8.6 9.2 8.6 10.6" fill="none" stroke="#fff" stroke-width="1.6"/><rect x="7.7" y="12" width="1.8" height="1.8" fill="#fff"/></svg>
<svg class="a" style="left:547px;top:292px;" width="22" height="22" viewBox="0 0 22 22"><path d="M1 1 H12.8 L17 5.2 V20.5 H1 Z" fill="#cde6f7"/><path d="M12.8 1 L17 5.2 H12.8 Z" fill="#9ed0f0"/><path d="M3 4.3 H9 M3 7.7 H11.5 M3 11 H12 M3 14.3 H10" stroke="#4cc864" stroke-width="1.4"/><path d="M10.8 18 L18.6 9.3 L20.8 11.2 L13 19.8 Z" fill="#e8344a"/><path d="M10.8 18 L13 19.8 L10.2 21 Z" fill="#f4c84a"/><path d="M18.6 9.3 L19.6 8.2 L21.8 10.1 L20.8 11.2 Z" fill="#555"/></svg>
<svg class="a" style="left:574px;top:293px;" width="20" height="20" viewBox="0 0 20 20"><rect x="2" y="1.7" width="7.5" height="12" fill="#ececec" stroke="#cfcfcf" stroke-width="0.8"/><path d="M7.5 8 Q7 3.2 11 2.8 Q14 2.7 14.4 6.6" fill="none" stroke="#4a84c8" stroke-width="2.6"/><path d="M11.6 6.3 H16.4 L14 11 Z" fill="#3f78c0"/><path d="M7.3 9.2 H20 L19.3 13.6 H8 Z" fill="#d69c46"/><rect x="9" y="9.8" width="9.4" height="1.6" fill="#8a5a20"/><rect x="9" y="13.5" width="9.6" height="5.2" fill="#dca552"/><path d="M9 15.6 H18.6" stroke="#b8863a" stroke-width="0.8"/></svg>
<svg class="a" style="left:602px;top:292px;" width="20" height="20" viewBox="0 0 20 20"><rect x="1" y="5.5" width="18" height="13.5" fill="#cfe6f8"/><path d="M1 5.6 H19 M1 18.7 H4 M16 18.7 H19" stroke="#9b72b6" stroke-width="1"/><path d="M1.5 7.9 H18.5" stroke="#9b72b6" stroke-width="0.9" stroke-dasharray="1 2"/><rect x="4" y="15" width="12" height="3.8" fill="#5cc49c"/><rect x="4" y="14.6" width="12" height="1" fill="#9b72b6"/><path d="M10 1.5 V11.5" stroke="#f4e4d4" stroke-width="1.8"/><path d="M6.3 8.8 L10 12.6 L13.7 8.8" fill="none" stroke="#9b72b6" stroke-width="1" stroke-dasharray="1 0.8"/><rect x="9" y="0.6" width="2" height="1.2" fill="#9b72b6"/></svg>
<svg class="a" style="left:631px;top:294px;" width="18" height="18" viewBox="0 0 18 18"><rect x="1.5" y="1.5" width="15" height="15" fill="#fff" stroke="#6e6e6e" stroke-width="1.1"/><path d="M3.8 8.8 L7 12.6 L13.4 4.5" fill="none" stroke="#333" stroke-width="2.2"/></svg>
<div class="a" style="left:656px;top:291px;width:125px;height:25px;background:#fff;border:1px solid #a9a9a9;box-sizing:border-box;"></div>
<svg class="a" style="left:766px;top:301px;" width="10" height="6" viewBox="0 0 10 6"><path d="M0 0 H10 L5 5.3 Z" fill="#404040"/></svg>
<svg class="a" style="left:783px;top:292px;" width="22" height="22" viewBox="0 0 22 22"><rect x="1.8" y="1.8" width="18.6" height="18.6" rx="5" fill="#a9c5c9" stroke="#3f707c" stroke-width="1.3"/><path d="M11.1 4.6 V17.6 M4.6 11.1 H17.6" stroke="#4d7d62" stroke-width="2"/></svg>
<svg class="a" style="left:812px;top:293px;" width="20" height="21" viewBox="0 0 20 21"><ellipse cx="7.5" cy="4" rx="6.5" ry="3" fill="#deae72"/><path d="M1 4 V13.5 Q1 16.5 7.5 16.5 Q10 16.5 11 16 V6.5 Q14 5.8 14 4 Q14 7 7.5 7 Q1 7 1 4 Z" fill="#d8a468"/><path d="M1 7.8 Q1 10.5 7.5 10.5 Q11 10.5 12.5 9.7 M1 11.5 Q1 14 7.5 14 L11 13.8" fill="none" stroke="#f4e4c8" stroke-width="1"/><path d="M10.5 13.5 A4.3 4.3 0 0 1 17.8 12.3 M18.3 16 A4.3 4.3 0 0 1 11 17.5" fill="none" stroke="#4ca86a" stroke-width="1.6"/><path d="M16.5 10.3 L19 12.8 L15.8 13.6 Z M12.5 19.5 L10 17 L13.2 16.2 Z" fill="#4ca86a"/></svg>
<svg class="a" style="left:840px;top:295px;" width="17" height="17" viewBox="0 0 17 17"><circle cx="8.2" cy="8.2" r="7.4" fill="#ecc3bc"/><rect x="3.8" y="6.9" width="8.8" height="2.6" fill="#fff"/></svg>
<div class="a" style="left:868px;top:289px;width:70px;height:27px;background:#fff;border:1px solid #3a6a78;box-sizing:border-box;"></div>
<svg class="a" style="left:922px;top:300px;" width="10" height="6" viewBox="0 0 10 6"><path d="M0 0 H10 L5 5.3 Z" fill="#404040"/></svg>
<svg class="a" style="left:946px;top:293px;" width="19" height="20" viewBox="0 0 19 20"><path d="M5 6 V1.5 H11.5 L14 4 V6" fill="#e4e4e4" stroke="#d0d0d0" stroke-width="0.8"/><rect x="1" y="6" width="16" height="8.5" rx="1.5" fill="#7b7b8c"/><rect x="1" y="6" width="16" height="2.5" fill="#9a9aaa"/><rect x="4" y="11.5" width="10" height="7" fill="#e8e8ec" stroke="#6e6e80" stroke-width="1"/><path d="M5.5 14.5 H12.5 M5.5 16.5 H12.5" stroke="#8a8a9a" stroke-width="0.8"/></svg>
<div class="a t " style="left:660.40px;top:293.80px;font-size:15px;line-height:20px;color:#333333;letter-spacing:-0.482px;">Standard</div>
<div class="a t " style="left:875.50px;top:293.45px;font-size:14px;line-height:20px;color:#333333;letter-spacing:-0.268px;">100%</div>
</body></html>
